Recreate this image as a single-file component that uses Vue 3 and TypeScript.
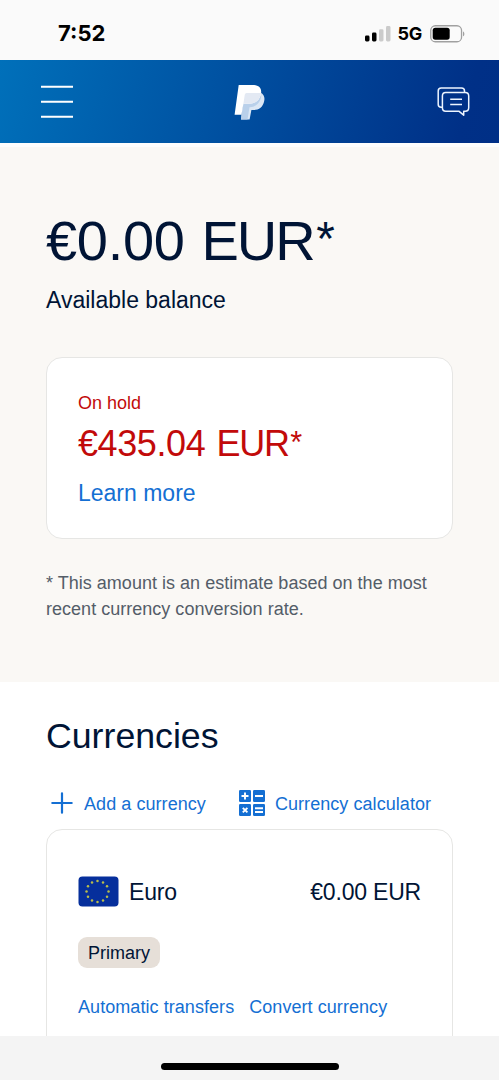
<script setup lang="ts">
interface Star {
  x: number
  y: number
}

const stars: Star[] = Array.from({ length: 12 }, (_, i) => {
  const angle = (i * Math.PI) / 6
  return { x: 19 + 11 * Math.sin(angle), y: 15.5 - 10.5 * Math.cos(angle) }
})

const currency = { name: 'Euro', balance: '€0.00 EUR', tag: 'Primary' }
const currencyLinks: string[] = ['Automatic transfers', 'Convert currency']
</script>

<template>
  <div class="screen">
    <div class="status">
      <span class="time">7:52</span>
      <div class="indicators">
        <svg width="26" height="16" viewBox="0 0 26 16">
          <rect x="0" y="9.5" width="4.5" height="6" rx="1.4" fill="#000" />
          <rect x="7" y="6.5" width="4.5" height="9" rx="1.4" fill="#000" />
          <rect x="14" y="3.3" width="4.5" height="12.2" rx="1.4" fill="#cbcbcb" />
          <rect x="21" y="0" width="4.5" height="15.5" rx="1.4" fill="#cbcbcb" />
        </svg>
        <span class="network">5G</span>
        <svg class="battery" width="36" height="18" viewBox="0 0 36 18">
          <rect x="0.75" y="0.75" width="30.8" height="16" rx="4.6" fill="none" stroke="#a0a0a0" stroke-width="1.3" />
          <rect x="2.7" y="2.7" width="17" height="12" rx="2.6" fill="#000" />
          <path d="M33 6.4c1.8.5 1.8 4.3 0 4.8z" fill="#a0a0a0" />
        </svg>
      </div>
    </div>

    <header class="topbar">
      <svg width="34" height="34" viewBox="0 0 34 34" stroke="#fff" stroke-width="2.1">
        <path d="M1 1.7h32M1 16.8h32M1 31.7h32" />
      </svg>
      <svg class="logo" width="32" height="36" viewBox="0 0 32 36">
        <path d="M10.600 8.500H26.500C30 10.500 31 13.400 30.200 17C29.200 22.800 25 26 20 26H17.400L15.600 35.600H7Z" fill="#dbe7f5" />
        <path d="M9.400 19.500H15C21 19.500 25.500 16.500 27 9.500C28.500 15 23.500 23.500 15.500 23.300L13.500 35.600H7L8 26Z" fill="#b9d0ea" />
        <path d="M4.700 1H18.500C25 1 28 4.500 27 9.500C25.800 16.500 21 19.800 15 19.800H9.400L7.500 30.700H0.600Z" fill="#fff" />
        <path d="M12.600 9H27C26.300 15.500 21.500 19.800 15 19.800H9.400L10.800 10.500Q11 9 12.600 9Z" fill="#e3e9f3" />
      </svg>
      <svg width="33" height="30" viewBox="0 0 33 30" fill="none" stroke="#edf5ff" stroke-width="1.5" stroke-linejoin="round">
        <path d="M5.300 20.300H4.200Q1.200 20.300 1.200 17.300V4.100Q1.200 1.100 4.200 1.100H24.500Q27.500 1.100 27.500 4.100V5.200" />
        <path d="M8.700 5.400H28.200Q31.700 5.400 31.700 8.900V20.700Q31.700 24.200 28.200 24.200H26.700V28.200L21.800 24.200H8.700Q5.400 24.200 5.400 20.700V8.900Q5.400 5.400 8.700 5.400Z" />
        <path d="M13.200 12.300H25M13.200 17.600H25" />
      </svg>
    </header>

    <section class="hero">
      <h1 class="balance">€0.00 <span class="code">EUR</span><span class="star">*</span></h1>
      <p class="available">Available balance</p>
      <div class="card hold">
        <span class="hold-label">On hold</span>
        <span class="hold-amount">€435.04 <span class="code">EUR</span><span class="star">*</span></span>
        <a class="learn">Learn more</a>
      </div>
      <p class="footnote">* This amount is an estimate based on the most<br />recent currency conversion rate.</p>
    </section>

    <section class="currencies">
      <h2 class="heading">Currencies</h2>
      <div class="actions">
        <a class="action">
          <svg width="22" height="22" viewBox="0 0 22 22" stroke="#146fd3" stroke-width="2.2" stroke-linecap="round">
            <path d="M1.300 11h19.400M11 1.300v19.400" />
          </svg>
          <span class="add-label">Add a currency</span>
        </a>
        <a class="action">
          <svg width="26" height="26" viewBox="0 0 26 26">
            <g fill="#146fd3">
              <rect width="12" height="12" rx="1.200" />
              <rect x="14" width="12" height="12" rx="1.200" />
              <rect y="14" width="12" height="12" rx="1.200" />
              <rect x="14" y="14" width="12" height="12" rx="1.200" />
            </g>
            <path d="M2.500 6h7M6 2.500v7M16 6h8M3.800 17.800l4.600 4.600M8.400 17.800l-4.600 4.600M16 18.200h8M16 22h8" stroke="#fff" stroke-width="1.900" />
          </svg>
          <span class="calc-label">Currency calculator</span>
        </a>
      </div>
      <div class="card account">
        <div class="account-row">
          <svg width="41" height="31" viewBox="0 0 41 31">
            <rect x="0.500" y="0.500" width="40" height="30" rx="4" fill="#062f9c" />
            <circle v-for="(s, i) in stars" :key="i" :cx="s.x + 0.5" :cy="s.y" r="1.250" fill="#b9bd4b" />
          </svg>
          <span class="name">{{ currency.name }}</span>
          <span class="amount">{{ currency.balance }}</span>
        </div>
        <span class="tag">{{ currency.tag }}</span>
        <div class="links">
          <a v-for="link in currencyLinks" :key="link">{{ link }}</a>
        </div>
      </div>
    </section>

    <footer class="home"><span class="home-bar"></span></footer>
  </div>
</template>

<style>
html,
body {
  margin: 0;
  background: #fff;
}
</style>

<style scoped>
.screen {
  box-sizing: border-box;
  width: 499px;
  height: 1080px;
  overflow: hidden;
  display: flex;
  flex-direction: column;
  background: #fff;
  color: #001435;
  font-family: "Liberation Sans", Arial, sans-serif;
}
.screen svg {
  display: block;
  flex: none;
}
h1,
h2,
p {
  margin: 0;
  font-weight: 400;
}
.status {
  flex: none;
  box-sizing: border-box;
  height: 60px;
  padding: 7px 33px 0 58px;
  display: flex;
  align-items: center;
  justify-content: space-between;
  background: #fafafa;
  color: #000;
  font-family: Inter, "Liberation Sans", sans-serif;
}
.time {
  font-size: 22px;
  line-height: 26px;
  font-weight: 700;
  margin-top: -1px;
}
.indicators {
  display: flex;
  align-items: center;
}
.network {
  margin: 0 8px 0 7px;
  font-size: 18px;
  font-weight: 700;
  letter-spacing: -0.3px;
}
.topbar {
  flex: none;
  box-sizing: border-box;
  height: 83px;
  padding: 0 29px 0 40px;
  display: flex;
  align-items: center;
  justify-content: space-between;
  background: linear-gradient(105deg, #0070ba 0%, #003087 92%, #002f86 100%);
}
.logo {
  margin-left: -11px;
}
.hero {
  flex: none;
  box-sizing: border-box;
  height: 539px;
  padding: 62px 46px 0;
  border-top: 4px solid #fdfdfd;
  background: #faf8f5;
}
.balance {
  height: 64px;
  font-size: 56px;
  line-height: 64px;
  letter-spacing: -0.3px;
  white-space: nowrap;
}
.code {
  margin-left: 1.500px;
  letter-spacing: -0.035em;
}
.star {
  display: inline-block;
  margin-left: 0.050em;
  font-size: 0.850em;
  line-height: 0;
  vertical-align: 0.110em;
}
.available {
  margin-top: 13px;
  font-size: 23px;
  line-height: 28px;
}
.card {
  box-sizing: border-box;
  width: 407px;
  border: 1.500px solid #e6e6e4;
  border-radius: 16px;
  background: #fff;
}
.hold {
  height: 182px;
  margin-top: 43px;
  padding: 34px 31px 0;
  display: flex;
  flex-direction: column;
}
.hold-label {
  color: #c20a0a;
  font-size: 18px;
  line-height: 22px;
}
.hold-amount {
  margin-top: 10px;
  color: #c20a0a;
  font-size: 36px;
  line-height: 40px;
  letter-spacing: -0.4px;
  white-space: nowrap;
}
.learn {
  margin-top: 15px;
  color: #146fd3;
  font-size: 23px;
  line-height: 28px;
}
.footnote {
  margin-top: 32px;
  color: #545d68;
  font-size: 18px;
  line-height: 25.600px;
  letter-spacing: 0.020px;
  white-space: nowrap;
}
.currencies {
  flex: none;
  box-sizing: border-box;
  height: 354px;
  padding: 34px 46px 0;
  overflow: hidden;
}
.heading {
  font-size: 35.700px;
  line-height: 40px;
}
.actions {
  height: 26px;
  margin: 34px 0 13px 5px;
  display: flex;
  align-items: center;
  gap: 33px;
}
.action {
  display: flex;
  align-items: center;
  color: #146fd3;
  font-size: 18px;
  line-height: 26px;
  letter-spacing: 0.060px;
}
.add-label,
.calc-label {
  padding-top: 1px;
}
.add-label {
  margin-left: 11px;
}
.calc-label {
  margin-left: 10px;
}
.account {
  height: 240px;
  padding: 45px 31px 0;
}
.account-row {
  display: flex;
  align-items: center;
  height: 32px;
  font-size: 23px;
  line-height: 32px;
}
.name {
  margin-left: 10px;
  padding-top: 2px;
  letter-spacing: -0.200px;
}
.amount {
  margin-left: auto;
  padding-top: 2px;
  letter-spacing: -0.200px;
}
.tag {
  display: block;
  box-sizing: border-box;
  width: 82px;
  height: 31px;
  margin-top: 30px;
  border-radius: 9px;
  background: #e6dfd8;
  font-size: 18px;
  line-height: 33px;
  text-align: center;
}
.links {
  display: flex;
  gap: 15px;
  margin-top: 26px;
  color: #146fd3;
  font-size: 18px;
  line-height: 26px;
  letter-spacing: 0.060px;
  white-space: nowrap;
}
.home {
  flex: none;
  box-sizing: border-box;
  height: 44px;
  padding-top: 27px;
  display: flex;
  justify-content: center;
  background: #f4f4f4;
}
.home-bar {
  width: 178px;
  height: 6.500px;
  border-radius: 4px;
  background: #000;
}
</style>
